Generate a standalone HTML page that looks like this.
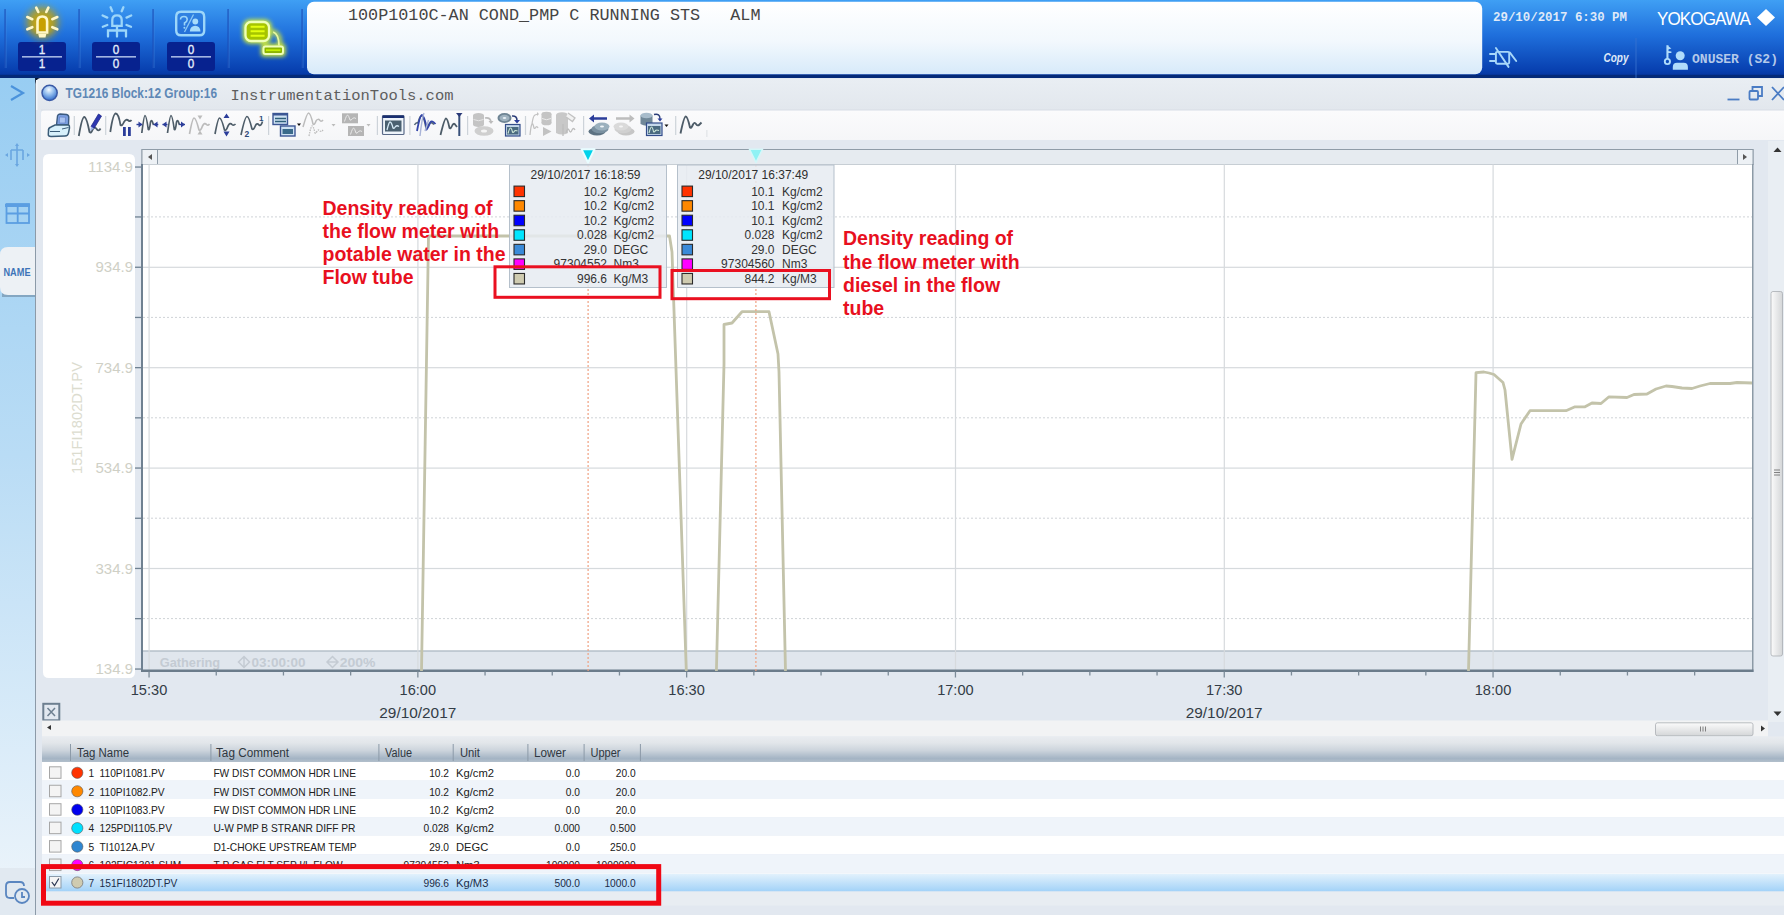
<!DOCTYPE html>
<html><head><meta charset="utf-8"><style>
html,body{margin:0;padding:0;width:1784px;height:915px;overflow:hidden;background:#e4e9ef;font-family:'Liberation Sans',sans-serif}
svg{position:absolute;left:0;top:0;display:block}
</style></head><body>
<svg width="1784" height="915" viewBox="0 0 1784 915">
<defs><linearGradient id="gTop" x1="0" y1="0" x2="0" y2="1"><stop offset="0" stop-color="#3f9ff4"/><stop offset="0.45" stop-color="#1f6fdc"/><stop offset="0.9" stop-color="#0840b0"/><stop offset="1" stop-color="#05339a"/></linearGradient><linearGradient id="gMsg" x1="0" y1="0" x2="0" y2="1"><stop offset="0" stop-color="#ffffff"/><stop offset="0.55" stop-color="#f2f8fd"/><stop offset="1" stop-color="#d7eafa"/></linearGradient><linearGradient id="gSide" x1="0" y1="0" x2="0" y2="1"><stop offset="0" stop-color="#98cdf2"/><stop offset="0.45" stop-color="#b9dcf5"/><stop offset="1" stop-color="#eef5fb"/></linearGradient><linearGradient id="gHdr" x1="0" y1="0" x2="0" y2="1"><stop offset="0" stop-color="#e9ecf0"/><stop offset="0.25" stop-color="#e2e6ea"/><stop offset="0.55" stop-color="#ccd4dc"/><stop offset="0.86" stop-color="#a4b4c4"/><stop offset="1" stop-color="#b2bfcb"/></linearGradient><linearGradient id="gSel" x1="0" y1="0" x2="0" y2="1"><stop offset="0" stop-color="#e2f1fc"/><stop offset="1" stop-color="#a2d2f8"/></linearGradient><linearGradient id="gTitle" x1="0" y1="0" x2="0" y2="1"><stop offset="0" stop-color="#e9eef3"/><stop offset="1" stop-color="#e2e7ed"/></linearGradient><linearGradient id="gTool" x1="0" y1="0" x2="0" y2="1"><stop offset="0" stop-color="#fbfbfc"/><stop offset="1" stop-color="#f5f6f8"/></linearGradient><linearGradient id="gThumb" x1="0" y1="0" x2="0" y2="1"><stop offset="0" stop-color="#fbfbfb"/><stop offset="1" stop-color="#d4d6d8"/></linearGradient><linearGradient id="gThumbV" x1="0" y1="0" x2="1" y2="0"><stop offset="0" stop-color="#fbfbfb"/><stop offset="1" stop-color="#d4d6d8"/></linearGradient><radialGradient id="gGlobe" cx="0.45" cy="0.3" r="0.65"><stop offset="0" stop-color="#f4faff"/><stop offset="0.45" stop-color="#9cc4f0"/><stop offset="1" stop-color="#3f78d0"/></radialGradient><filter id="glowY" x="-50%" y="-50%" width="200%" height="200%"><feGaussianBlur stdDeviation="3.5"/></filter><filter id="glowG" x="-50%" y="-50%" width="200%" height="200%"><feGaussianBlur stdDeviation="2"/></filter></defs>
<rect x="0" y="0" width="1784" height="78" fill="url(#gTop)"/>
<rect x="0" y="74.8" width="1784" height="3.5" fill="#042a78"/>
<rect x="4.5" y="9" width="1.2" height="59" fill="#1a4fb8"/>
<rect x="5.7" y="9" width="0.8" height="59" fill="#4a8fe6" opacity="0.5"/>
<rect x="78.5" y="9" width="1.2" height="59" fill="#1a4fb8"/>
<rect x="79.7" y="9" width="0.8" height="59" fill="#4a8fe6" opacity="0.5"/>
<rect x="152.5" y="9" width="1.2" height="59" fill="#1a4fb8"/>
<rect x="153.7" y="9" width="0.8" height="59" fill="#4a8fe6" opacity="0.5"/>
<rect x="227.5" y="9" width="1.2" height="59" fill="#1a4fb8"/>
<rect x="228.7" y="9" width="0.8" height="59" fill="#4a8fe6" opacity="0.5"/>
<rect x="301.5" y="9" width="1.2" height="59" fill="#1a4fb8"/>
<rect x="302.7" y="9" width="0.8" height="59" fill="#4a8fe6" opacity="0.5"/>
<rect x="18" y="42" width="48" height="29" rx="3" fill="#07228f"/>
<rect x="22" y="56.2" width="40" height="1.3" fill="#c9d8f5"/>
<text x="42" y="54" font-size="12.5" fill="#e6eefc" text-anchor="middle" font-weight="normal" font-family="Liberation Sans" textLength="6.5" lengthAdjust="spacingAndGlyphs" stroke="#e6eefc" stroke-width="0.35">1</text>
<text x="42" y="68" font-size="12.5" fill="#e6eefc" text-anchor="middle" font-weight="normal" font-family="Liberation Sans" textLength="6.5" lengthAdjust="spacingAndGlyphs" stroke="#e6eefc" stroke-width="0.35">1</text>
<rect x="92" y="42" width="48" height="29" rx="3" fill="#07228f"/>
<rect x="96" y="56.2" width="40" height="1.3" fill="#c9d8f5"/>
<text x="116" y="54" font-size="12.5" fill="#e6eefc" text-anchor="middle" font-weight="normal" font-family="Liberation Sans" textLength="6.5" lengthAdjust="spacingAndGlyphs" stroke="#e6eefc" stroke-width="0.35">0</text>
<text x="116" y="68" font-size="12.5" fill="#e6eefc" text-anchor="middle" font-weight="normal" font-family="Liberation Sans" textLength="6.5" lengthAdjust="spacingAndGlyphs" stroke="#e6eefc" stroke-width="0.35">0</text>
<rect x="167" y="42" width="48" height="29" rx="3" fill="#07228f"/>
<rect x="171" y="56.2" width="40" height="1.3" fill="#c9d8f5"/>
<text x="191" y="54" font-size="12.5" fill="#e6eefc" text-anchor="middle" font-weight="normal" font-family="Liberation Sans" textLength="6.5" lengthAdjust="spacingAndGlyphs" stroke="#e6eefc" stroke-width="0.35">0</text>
<text x="191" y="68" font-size="12.5" fill="#e6eefc" text-anchor="middle" font-weight="normal" font-family="Liberation Sans" textLength="6.5" lengthAdjust="spacingAndGlyphs" stroke="#e6eefc" stroke-width="0.35">0</text>
<g filter="url(#glowY)"><circle cx="42.3" cy="22.5" r="16" fill="#b8a018" opacity="0.85"/><circle cx="42.3" cy="24" r="9" fill="#d0a800"/></g>
<path d="M38.9,31 L38.9,21.5 Q38.9,18.5 42.4,18.5 Q45.9,18.5 45.9,21.5 L45.9,31 Z" fill="#c8a000"/>
<g stroke="#fff7c8" stroke-width="2.6" stroke-linecap="round" fill="none"><path d="M37.5,32.5 L37.5,21.5 Q37.5,16.5 42.3,16.5 Q47.1,16.5 47.1,21.5 L47.1,32.5 Z"/><path d="M36.2,7.6 L38.3,12 M48.4,7.6 L46.3,12 M27.3,17 L32.3,19.2 M27.3,29.3 L32.3,27.2 M57.3,17 L52.3,19.2 M57.3,29.3 L52.3,27.2"/></g>
<path d="M38.3,34 L46.3,34 L45.5,37.5 L39.1,37.5 Z" fill="#fff7c8"/>
<g stroke="#9cd6fa" stroke-width="2.3" stroke-linecap="round" fill="none"><path d="M112.3,25.8 L112.3,20 Q112.3,15.3 117,15.3 Q121.7,15.3 121.7,20 L121.7,25.8 Z"/><path d="M117,26 L117,36.5 M108,36.5 L108,30.5 L126,30.5 L126,36.5"/><path d="M110.6,7.2 L112.3,11.3 M123.4,7.2 L121.7,11.3 M102.6,15.5 L107.3,17.6 M102.8,26.8 L107.3,25 M131.2,15.5 L126.5,17.6 M131,26.8 L126.5,25"/></g>
<path d="M181,11.8 L199.5,11.8 Q204.2,11.8 204.2,17 L204.2,30.5 Q204.2,35.3 199.5,35.3 L181,35.3 Q176.2,35.3 176.2,30.5 L176.2,17 Q176.2,11.8 181,11.8 Z" fill="#2f6fd0" fill-opacity="0.35" stroke="#9cd6fa" stroke-width="2.4"/>
<path d="M180.5,19.5 Q180.5,16.5 184,16.5 Q187.2,16.5 187.2,19.5 Q187.2,21.5 184.5,23 L184.5,25.5" stroke="#9cd6fa" stroke-width="1.6" fill="none"/><circle cx="184.4" cy="27.8" r="1" fill="#9cd6fa"/>
<path d="M184.5,32 L193.5,14.5" stroke="#8cc8f5" stroke-width="1.3"/>
<circle cx="195.3" cy="21.5" r="2.9" fill="#a8dcfb"/><path d="M189.8,31.5 Q190.2,26 195.2,25.8 Q200.2,26 200.5,31.5 Z" fill="#a8dcfb"/>
<g filter="url(#glowG)"><rect x="243" y="19.5" width="28.5" height="24" rx="7" fill="#d8f030"/><rect x="261" y="44" width="24.5" height="12.5" rx="3" fill="#d8f030"/><path d="M272,31 Q281,33 280,46" stroke="#c8e040" stroke-width="4" fill="none"/></g>
<rect x="245.5" y="22" width="23.5" height="19" rx="5.5" fill="#a6c400" stroke="#eeffb8" stroke-width="2.3"/>
<path d="M250.6,26.8 L264.6,26.8 M250.6,31.3 L264.6,31.3 M250.6,35.8 L264.6,35.8" stroke="#e4ff10" stroke-width="2"/>
<path d="M273.2,32 Q278.8,34 279,45.5" stroke="#e6f8a0" stroke-width="1.8" fill="none"/>
<rect x="263.5" y="46.5" width="19.5" height="7.5" rx="2" fill="#8cb400" stroke="#eeffb8" stroke-width="2"/>
<path d="M266,50.2 L280.5,50.2" stroke="#c4f000" stroke-width="1.8"/>
<rect x="307" y="1.7" width="1175.2" height="72.6" rx="7" fill="url(#gMsg)"/>
<text x="348" y="20" font-size="16.6" fill="#444444" text-anchor="start" font-weight="normal" font-family="Liberation Mono" textLength="412.5" lengthAdjust="spacingAndGlyphs">100P1010C-AN COND_PMP C RUNNING STS   ALM</text>
<text x="1493" y="21" font-size="12.4" fill="#dfe9f8" text-anchor="start" font-weight="bold" font-family="Liberation Mono" textLength="134" lengthAdjust="spacingAndGlyphs">29/10/2017 6:30 PM</text>
<text x="1657" y="25" font-size="18.5" fill="#ffffff" text-anchor="start" font-weight="normal" font-family="Liberation Sans" textLength="93" lengthAdjust="spacingAndGlyphs" letter-spacing="-1">YOKOGAWA</text>
<path d="M1766,9 L1775,17.5 L1766,26 L1757,17.5 Z" fill="#ffffff"/>
<text x="1603.5" y="62" font-size="13" fill="#dfe9f8" text-anchor="start" font-weight="bold" font-family="Liberation Sans" textLength="25" lengthAdjust="spacingAndGlyphs" font-style="italic">Copy</text>
<rect x="1635.5" y="38" width="1" height="40" fill="#3a74d0" opacity="0.8"/>
<text x="1692" y="62.5" font-size="13.5" fill="#b4c9ea" text-anchor="start" font-weight="bold" font-family="Liberation Mono" textLength="86" lengthAdjust="spacingAndGlyphs">ONUSER (S2)</text>
<g stroke="#a8d8fa" stroke-width="1.9" fill="none" stroke-linecap="round" stroke-linejoin="round"><path d="M1490,54 L1495.5,54 M1490,61 L1495.5,61"/><rect x="1495.9" y="51.9" width="13.3" height="11.9" rx="1.2"/><path d="M1509.9,52.6 L1516.2,61"/><path d="M1495.9,48 L1508.5,66.9"/></g>
<g fill="#b0dcfb"><circle cx="1667.4" cy="61.5" r="2.6" fill="none" stroke="#b0dcfb" stroke-width="1.9"/><rect x="1666.4" y="45.2" width="2.1" height="13.8"/><path d="M1668,46 L1671.4,48.5 L1668,49.5 Z M1668,51 L1671.4,51.5 L1671.4,53 L1668,53 Z"/><circle cx="1680.2" cy="55.7" r="4.5"/><path d="M1672.8,69.7 L1672.8,67 Q1672.8,62.7 1677,62.7 L1683.7,62.7 Q1687.9,62.7 1687.9,67 L1687.9,69.7 Z"/></g>
<rect x="0" y="78" width="35" height="837" fill="url(#gSide)"/>
<rect x="0" y="868" width="35" height="47" fill="#e1e9f1"/>
<path d="M11,86 L23,93 L11,100" stroke="#4b93dc" stroke-width="2.2" fill="none"/>
<g stroke="#6aa6e0" stroke-width="1.6" fill="none"><path d="M17,146 L17,164 M11,150 L23,150 M11,150 L11,160 M23,150 L23,160"/></g><path d="M17,143 L15,146 L19,146 Z M17,167 L15,164 L19,164 Z M5,155 L8,153 L8,157 Z M30,155 L27,153 L27,157 Z" fill="#6aa6e0"/>
<g stroke="#5b9ee2" stroke-width="1.8" fill="none"><rect x="6.5" y="204" width="22.5" height="19"/><path d="M17.7,204 L17.7,223 M6.5,213.5 L29,213.5"/></g>
<rect x="5" y="204" width="25" height="3" fill="#5b9ee2"/>
<path d="M2,297 L35,297 L35,250 L2,250 Z" fill="#5d7890" opacity="0.5"/>
<path d="M8,247 L35,247 L35,295 L8,295 Q0,295 0,287 L0,255 Q0,247 8,247 Z" fill="#edf1f5"/>
<text x="17" y="275.5" font-size="10.5" fill="#3d74b8" text-anchor="middle" font-weight="bold" font-family="Liberation Sans" textLength="27" lengthAdjust="spacingAndGlyphs">NAME</text>
<g stroke="#5a86c0" stroke-width="1.8" fill="none"><path d="M14,898 L10,898 Q6,898 6,894 L6,886 Q6,882 10,882 L20,882 Q24,882 24,886"/><circle cx="22" cy="896" r="7" fill="#e1e9f1"/><path d="M22,892 L22,897 L25,897"/></g>
<rect x="35" y="78" width="1749" height="837" fill="#e2e8f0"/>
<rect x="35" y="78" width="1" height="837" fill="#8c9aa8"/>
<rect x="36" y="79" width="1748" height="31" fill="url(#gTitle)"/>
<circle cx="49.6" cy="92.8" r="7.6" fill="url(#gGlobe)" stroke="#3a5aa6" stroke-width="1.5"/>
<path d="M35,78 L40,78 Q36,79 35.5,84 Z" fill="#0a1830"/>
<rect x="36" y="80" width="1.5" height="30" fill="#f4f8fc"/>
<text x="65.5" y="97.8" font-size="14" fill="#5e88b6" text-anchor="start" font-weight="bold" font-family="Liberation Sans" textLength="151.5" lengthAdjust="spacingAndGlyphs">TG1216 Block:12 Group:16</text>
<text x="230.5" y="99.8" font-size="15.5" fill="#5e5e5e" text-anchor="start" font-weight="normal" font-family="Liberation Mono" textLength="223" lengthAdjust="spacingAndGlyphs">InstrumentationTools.com</text>
<g stroke="#4a7cc4" stroke-width="1.8" fill="none"><path d="M1727.5,99.5 L1739.5,99.5"/><rect x="1749.5" y="91" width="8.5" height="8.5" rx="1"/><path d="M1752.5,91 L1752.5,87 L1762,87 L1762,96 L1758,96"/><path d="M1772,87 L1784,100 M1784,87 L1772,100"/></g>
<path d="M41,140 L41,114 Q41,110 45,110 L1784,110 L1784,140 Z" fill="url(#gTool)"/>
<rect x="41" y="109.5" width="1743" height="1" fill="#d8dee5"/>
<rect x="73.7" y="116" width="1.2" height="19" fill="#cdd3d9"/>
<rect x="105.1" y="116" width="1.2" height="19" fill="#cdd3d9"/>
<rect x="268.0" y="116" width="1.2" height="19" fill="#cdd3d9"/>
<rect x="376.8" y="116" width="1.2" height="19" fill="#cdd3d9"/>
<rect x="409.3" y="116" width="1.2" height="19" fill="#cdd3d9"/>
<rect x="467.0" y="116" width="1.2" height="19" fill="#cdd3d9"/>
<rect x="524.9" y="116" width="1.2" height="19" fill="#cdd3d9"/>
<rect x="583.0" y="116" width="1.2" height="19" fill="#cdd3d9"/>
<rect x="675.1" y="116" width="1.2" height="19" fill="#cdd3d9"/>
<path d="M56.5,125 L57.5,116 Q58,114 60,114 L66.5,114.5 Q68.8,115 68.8,117.5 L68.5,125 Z" fill="#7c9fe0" stroke="#3b5a80" stroke-width="1.4"/><path d="M59.5,117 L65.5,117.3 L65.3,123 L59.3,123 Z" fill="#a9c2f0" stroke="#5a78c0" stroke-width="0.6"/><path d="M48.5,131 Q48,128 51,127 L55,125 L68.5,125 Q69.8,125.5 69.5,128 L68.5,133 Q68,136 65,136 L51,136.5 Q48,136.5 48.3,134 Z" fill="#d7f0fb" stroke="#3b5c78" stroke-width="1.5"/><path d="M50,131.5 L60,131.5 M62,129 L68.5,127.5" stroke="#3b5c78" stroke-width="1"/>
<path d="M78.8,136 Q82,117 84.3,117 Q86.5,117 89.5,132 Q91,134 93,129 Q95,126 97,129.5 Q99,131.5 100.5,128.5" stroke="#4d5c68" stroke-width="1.8" fill="none"/><path d="M91,126.5 L98.5,114 L101.5,116 L94,128.5 Z" fill="#2d36b0" stroke="#1f2a88" stroke-width="0.8"/><path d="M91,126.5 L94,128.5 L90,131 Z" fill="#9fb4e8"/>
<path d="M110.3,132 Q113,113.5 115.8,113.5 Q118.5,113.5 120.5,125 Q122,126.5 124,122 Q126,118.5 128.5,120.5 Q130,122 131.5,120" stroke="#4d5c68" stroke-width="1.8" fill="none"/><rect x="123" y="127" width="2.8" height="9" fill="#2b3d9a"/><rect x="128" y="127" width="2.8" height="9" fill="#2b3d9a"/>
<path d="M141.8,133 Q144,115.5 145,115.5 Q146.3,115.5 148.3,129.5 Q149.5,131 150.5,122 Q151.5,119 152.5,122 L153.5,125" stroke="#4d5c68" stroke-width="1.7" fill="none"/><path d="M136.5,124.5 L142,124.5" stroke="#2b3d9a" stroke-width="1.4"/><path d="M142.5,124.5 L138.5,121.5 L138.5,127.5 Z" fill="#2b3d9a"/><path d="M153.5,124.5 L158.3,124.5" stroke="#2b3d9a" stroke-width="1.4"/><path d="M153.5,124.5 L157.5,121.5 L157.5,127.5 Z" fill="#2b3d9a"/>
<path d="M167.5,133 Q170,115.5 171,115.5 Q172.3,115.5 174.3,129.5 Q175.5,131 176.5,122 Q177.5,119 178.5,122 L179.5,125" stroke="#4d5c68" stroke-width="1.7" fill="none"/><path d="M162.5,124.5 L167.5,124.5" stroke="#2b3d9a" stroke-width="1.4"/><path d="M162.5,124.5 L166.5,121.5 L166.5,127.5 Z" fill="#2b3d9a"/><path d="M179.5,124.5 L185,124.5" stroke="#2b3d9a" stroke-width="1.4"/><path d="M185,124.5 L181,121.5 L181,127.5 Z" fill="#2b3d9a"/>
<path d="M189.5,134 Q192.5,118 194,118 Q196,118 199,130 Q200.5,131.5 202.5,126 Q204.5,122 206.5,124.5 Q208,126 209.5,124" stroke="#bcbcbc" stroke-width="1.7" fill="none"/><path d="M197.5,115.5 L202.5,115.5 L200,119.5 Z M197.5,134.5 L202.5,134.5 L200,130.5 Z" fill="#bcbcbc"/>
<path d="M215,134 Q218,118 219.5,118 Q221.5,118 224.5,130 Q226,131.5 228,126 Q230,122 232,124.5 Q233.5,126 235.5,124" stroke="#4d5c68" stroke-width="1.7" fill="none"/><path d="M223.5,118 L229.5,118 L226.5,113.5 Z M223.5,131.5 L229.5,131.5 L226.5,136.5 Z" fill="#2b3d9a"/>
<path d="M241,135 Q245,116.5 247,116.5 Q249,116.5 252,129 Q253.5,130.5 255.5,125.5 Q257,122.5 259,125 Q261,126.5 262.5,121.5" stroke="#4d5c68" stroke-width="1.7" fill="none"/><text x="244.5" y="137" font-size="8.5" font-weight="bold" fill="#2f4a78" font-family="Liberation Sans">2</text><text x="259" y="120.5" font-size="8" font-weight="bold" fill="#2f4a78" font-family="Liberation Sans">1</text>
<rect x="273" y="113.5" width="14.5" height="11" fill="#cfe2f3" stroke="#3d5794" stroke-width="1.4"/><rect x="273" y="113.5" width="14.5" height="2" fill="#3d5794"/><path d="M275,118.5 L286,118.5 M275,121.5 L286,121.5" stroke="#2f5f7a" stroke-width="1.4"/><rect x="280.5" y="126" width="14.5" height="10" fill="#cfe2f3" stroke="#3d5794" stroke-width="1.4"/><rect x="282.5" y="129" width="10.5" height="5" fill="#3a6a8a"/><path d="M297,123.5 L301,123.5 L299,126 Z" fill="#111"/>
<path d="M303,127 Q307,113 308.5,113 Q310.5,113 313,124 Q314.5,125.5 316,121 Q318,118 320,120.5 Q321.5,122 323,120" stroke="#bcbcbc" stroke-width="1.5" fill="none"/><path d="M309,136 Q311,126 312,126 Q313.5,126 315,133 Q316,134 317,131 Q318.5,129 320,131 Q321.5,132 323,130" stroke="#bcbcbc" stroke-width="1.3" fill="none" stroke-dasharray="1.5,1"/><path d="M331.5,124 L335.5,124 L333.5,126.5 Z" fill="#bcbcbc"/>
<rect x="342" y="113.3" width="16" height="10" fill="#b5b5b5"/><path d="M344.5,121.5 Q346.5,115 347.5,115 Q348.5,115 350,120 Q351,121 352.5,118.5 Q354,117 356,118.5" stroke="#e8e8e8" stroke-width="1" fill="none"/><rect x="348" y="126" width="16" height="10" fill="#b5b5b5"/><path d="M350.5,134.5 Q352.5,128 353.5,128 Q354.5,128 356,133 Q357,134 358.5,131.5 Q360,130 362,131.5" stroke="#e8e8e8" stroke-width="1" fill="none"/><path d="M366.5,124 L370.5,124 L368.5,126.5 Z" fill="#bcbcbc"/>
<rect x="382.5" y="115.5" width="21.5" height="19" rx="1" fill="#eef4fa" stroke="#5a6a88" stroke-width="1.2"/><rect x="382.5" y="115.5" width="21.5" height="2.5" fill="#1a2f70"/><rect x="385" y="120.5" width="16.5" height="11" fill="#4a6070"/><path d="M387,130 Q389,122 390,122 Q391.5,122 393,128 Q394,129 395.5,126.5 Q397,125 399,126.5" stroke="#d5e8f5" stroke-width="1.3" fill="none"/>
<path d="M414.5,125 Q416,122 418,123 Q420,115 422,116 Q424,117 426,128 Q427.5,126 429,124 Q431,121 434,124.5" stroke="#56687a" stroke-width="1.6" fill="none"/><path d="M417,131 Q420,115 422,115 Q424,115 427,129 Q428.5,127 430.5,122 Q432,120 435.5,124" stroke="#3345a8" stroke-width="1.8" fill="none"/><path d="M420,136 Q422,118 424,113 M425,131 Q427,126 428.5,120" stroke="#a9b4d8" stroke-width="1.4" fill="none"/>
<path d="M440.5,135 Q444.5,118.5 446,118.5 Q447.5,118.5 449.5,128 Q450.5,129.5 452.5,125 Q454,122.5 455.5,125 L457,127" stroke="#4d5c68" stroke-width="1.8" fill="none"/><rect x="458.3" y="114" width="2" height="22" fill="#38507a"/><path d="M456,113 L462.5,113 L459.3,117 Z" fill="#2a3a78"/>
<ellipse cx="478.5" cy="115.5" rx="5.5" ry="2.5" fill="#c4c4c4"/><rect x="473" y="115.5" width="11" height="9" fill="#c4c4c4"/><ellipse cx="478.5" cy="124.5" rx="5.5" ry="2.5" fill="#c4c4c4"/><path d="M473.5,119.5 Q478.5,122 483.5,119.5" stroke="#e6e6e6" stroke-width="1" fill="none"/><path d="M485,118 Q490,117 491,121.5" stroke="#bcbcbc" stroke-width="1.6" fill="none"/><path d="M488.5,121 L493.5,121 L491,124 Z" fill="#bcbcbc"/><ellipse cx="484" cy="131" rx="9.5" ry="4.8" fill="#cfcfcf"/><ellipse cx="484" cy="131" rx="3" ry="1.5" fill="#f5f5f5"/>
<ellipse cx="504.5" cy="118" rx="7" ry="5" fill="#6e8494"/><ellipse cx="504.5" cy="118" rx="5" ry="3.2" fill="#9fb2bf"/><ellipse cx="504.5" cy="118" rx="1.8" ry="1.1" fill="#e8f0f5"/><path d="M512,116 Q517,115.5 517,120.5" stroke="#2b3d78" stroke-width="1.6" fill="none"/><path d="M514,120 L520,120 L517,123.5 Z" fill="#2b3d9a"/><rect x="505.5" y="124.5" width="14.5" height="11.5" fill="#c5d8ea" stroke="#334d8a" stroke-width="1.2"/><rect x="507" y="127" width="11.5" height="7.5" fill="#4a6a80"/><path d="M508,133.5 Q509.5,128 510.5,128 Q511.5,128 512.5,132 Q513.5,133 514.5,131 Q515.5,130 517.5,131" stroke="#cfe8d8" stroke-width="1.1" fill="none"/>
<path d="M530,135 Q531,125 532,124 Q533,123 534,128 Q535,129 536,127 Q537,126 538,128 M532,124 Q533,116 535,115 L538,114" stroke="#c2c2c2" stroke-width="1.3" fill="none"/><path d="M537,112 L539,114 L537,116 Z" fill="#c2c2c2"/><ellipse cx="546.5" cy="114" rx="5" ry="2.3" fill="#c4c4c4"/><rect x="541.5" y="114" width="10" height="9" fill="#c4c4c4"/><ellipse cx="546.5" cy="123" rx="5" ry="2.3" fill="#c4c4c4"/><path d="M542,118.5 Q546.5,121 551,118.5" stroke="#ececec" stroke-width="1" fill="none"/><path d="M543,127 L551.5,131.5 L543,136 Z" fill="#c2c2c2"/>
<ellipse cx="562" cy="115" rx="6" ry="2.8" fill="#c8c8c8"/><path d="M556,115 L556,133 Q562,136 568,133 L568,115" fill="#c8c8c8"/><path d="M568,113 L575,118 L572.5,121.5 L566,117" stroke="#c2c2c2" stroke-width="1.3" fill="#f2f2f2"/><path d="M563,124 L563,136 M566,133 Q567.5,127 569,130 Q570.5,134 572,130 Q573.5,127 575,130" stroke="#bdbdbd" stroke-width="1.3" fill="none"/>
<path d="M592,118.5 L607,118.5" stroke="#2b3d9a" stroke-width="2.5"/><path d="M589,118.5 L594,114.5 L594,122.5 Z" fill="#2b3d9a"/><ellipse cx="597" cy="131.5" rx="8.5" ry="4" fill="#5d7282"/><ellipse cx="600" cy="129" rx="8.5" ry="4.2" fill="#7a90a0"/><ellipse cx="602" cy="126.5" rx="7.5" ry="4" fill="#9bb0bd"/><ellipse cx="602" cy="126.5" rx="2" ry="1" fill="#f0f5f8"/>
<path d="M616,118.5 L631,118.5" stroke="#bdbdbd" stroke-width="2.5"/><path d="M634.5,118.5 L629.5,114.5 L629.5,122.5 Z" fill="#bdbdbd"/><ellipse cx="626" cy="131.5" rx="8.5" ry="4" fill="#c6c6c6"/><ellipse cx="623" cy="129" rx="8.5" ry="4.2" fill="#d0d0d0"/><ellipse cx="621" cy="126.5" rx="7.5" ry="4" fill="#dadada"/><ellipse cx="621" cy="126.5" rx="2" ry="1" fill="#f5f5f5"/>
<path d="M640.5,115.5 L640.5,124 Q646.5,127.5 652.5,124 L652.5,115.5" fill="#718898"/><ellipse cx="646.5" cy="115.5" rx="6" ry="2.8" fill="#a8bccb"/><path d="M654,114.5 Q660,113 660,119" stroke="#2b3d78" stroke-width="1.4" fill="none"/><path d="M657.5,118.5 L662.5,118.5 L660,121.5 Z" fill="#2b3d9a"/><rect x="646.5" y="123" width="15.5" height="12.5" fill="#c5d8ea" stroke="#334d8a" stroke-width="1.2"/><rect x="648" y="126" width="12.5" height="8" fill="#4a6a80"/><path d="M649,133 Q650.5,127 651.5,127 Q652.5,127 653.5,131.5 Q654.5,132.5 655.5,130.5 Q656.5,129.5 659,130.5" stroke="#cfe8d8" stroke-width="1.1" fill="none"/><path d="M664.5,124.5 L668.5,124.5 L666.5,127 Z" fill="#111"/>
<path d="M680.5,133.5 Q684,116.5 685.8,116.5 Q687.5,116.5 690,127.5 Q691,129 693,124.5 Q694.5,121.5 696,124 Q697.5,126.5 699.5,124.5 L701.5,122.5" stroke="#4d5c68" stroke-width="1.9" fill="none"/>
<rect x="706.5" y="130" width="0.8" height="7" fill="#d5d9dd"/>
<path d="M43,160 Q43,154 49,154 L129,154 Q135,154 135,160 L135,672 Q135,678 129,678 L49,678 Q43,678 43,672 Z" fill="#ffffff"/>
<rect x="142" y="149.5" width="1611" height="15" fill="#e6ebf0" stroke="#8f9ca8" stroke-width="1"/>
<rect x="142" y="149.5" width="15.5" height="15" fill="#edf1f5" stroke="#8f9ca8" stroke-width="1"/>
<rect x="1737.5" y="149.5" width="15.5" height="15" fill="#edf1f5" stroke="#8f9ca8" stroke-width="1"/>
<path d="M148,157 L152,154 L152,160 Z" fill="#555"/>
<path d="M1747,157 L1743,154 L1743,160 Z" fill="#555"/>
<rect x="142" y="164.5" width="1611" height="506" fill="#ffffff"/>
<rect x="143" y="651" width="1609" height="19" fill="#e0e6ed"/>
<rect x="143" y="650.3" width="1609" height="1.4" fill="#b1bcc7"/>
<text x="159.7" y="667" font-size="12" fill="#c4cbd3" text-anchor="start" font-weight="bold" font-family="Liberation Sans" textLength="60.5" lengthAdjust="spacingAndGlyphs">Gathering</text>
<text x="251.5" y="667" font-size="12" fill="#c4cbd3" text-anchor="start" font-weight="bold" font-family="Liberation Sans" textLength="54" lengthAdjust="spacingAndGlyphs">03:00:00</text>
<text x="339.7" y="667" font-size="12" fill="#c4cbd3" text-anchor="start" font-weight="bold" font-family="Liberation Sans" textLength="35.7" lengthAdjust="spacingAndGlyphs">200%</text>
<path d="M244,656.5 L249.5,662 L244,667.5 L238.5,662 Z M244,657 L244,667" stroke="#c4cbd3" stroke-width="1.5" fill="none"/>
<path d="M332.5,656.5 L338,662 L332.5,667.5 L327,662 Z M327.5,662 L337.5,662" stroke="#c4cbd3" stroke-width="1.5" fill="none"/>
<rect x="143" y="266.7" width="1609" height="1.2" fill="#d6dadd"/>
<rect x="143" y="367.1" width="1609" height="1.2" fill="#d6dadd"/>
<rect x="143" y="467.5" width="1609" height="1.2" fill="#d6dadd"/>
<rect x="143" y="567.9" width="1609" height="1.2" fill="#d6dadd"/>
<line x1="143" y1="216.9" x2="1752" y2="216.9" stroke="#cfd3d7" stroke-width="1" stroke-dasharray="2,2"/>
<line x1="143" y1="317.4" x2="1752" y2="317.4" stroke="#cfd3d7" stroke-width="1" stroke-dasharray="2,2"/>
<line x1="143" y1="417.8" x2="1752" y2="417.8" stroke="#cfd3d7" stroke-width="1" stroke-dasharray="2,2"/>
<line x1="143" y1="518.2" x2="1752" y2="518.2" stroke="#cfd3d7" stroke-width="1" stroke-dasharray="2,2"/>
<line x1="143" y1="618.6" x2="1752" y2="618.6" stroke="#cfd3d7" stroke-width="1" stroke-dasharray="2,2"/>
<rect x="148.5" y="164.5" width="1.2" height="506" fill="#d6dadd"/>
<rect x="417.3" y="164.5" width="1.2" height="506" fill="#d6dadd"/>
<rect x="686.1" y="164.5" width="1.2" height="506" fill="#d6dadd"/>
<rect x="954.9" y="164.5" width="1.2" height="506" fill="#d6dadd"/>
<rect x="1223.7" y="164.5" width="1.2" height="506" fill="#d6dadd"/>
<rect x="1492.5" y="164.5" width="1.2" height="506" fill="#d6dadd"/>
<rect x="141" y="164" width="2" height="508" fill="#6f8191"/>
<rect x="1752" y="164" width="1.5" height="508" fill="#8c9aa6"/>
<rect x="141" y="669.5" width="1612.5" height="2.5" fill="#6b7c8b"/>
<rect x="135" y="166.4" width="6" height="1.3" fill="#6f8191"/>
<rect x="135" y="216.3" width="6" height="1.3" fill="#6f8191"/>
<rect x="135" y="316.79999999999995" width="6" height="1.3" fill="#6f8191"/>
<rect x="135" y="417.2" width="6" height="1.3" fill="#6f8191"/>
<rect x="135" y="517.6" width="6" height="1.3" fill="#6f8191"/>
<rect x="135" y="618.0" width="6" height="1.3" fill="#6f8191"/>
<rect x="135" y="266.59999999999997" width="6" height="1.3" fill="#6f8191"/>
<rect x="135" y="367.0" width="6" height="1.3" fill="#6f8191"/>
<rect x="135" y="467.4" width="6" height="1.3" fill="#6f8191"/>
<rect x="135" y="567.8" width="6" height="1.3" fill="#6f8191"/>
<rect x="135" y="668.4" width="6" height="1.3" fill="#6f8191"/>
<rect x="148.4" y="671.5" width="1.3" height="6" fill="#7d8c99"/>
<rect x="215.6" y="671.5" width="1.3" height="4" fill="#7d8c99"/>
<rect x="282.79999999999995" y="671.5" width="1.3" height="4" fill="#7d8c99"/>
<rect x="350.0" y="671.5" width="1.3" height="4" fill="#7d8c99"/>
<rect x="417.2" y="671.5" width="1.3" height="6" fill="#7d8c99"/>
<rect x="484.4" y="671.5" width="1.3" height="4" fill="#7d8c99"/>
<rect x="551.6" y="671.5" width="1.3" height="4" fill="#7d8c99"/>
<rect x="618.8000000000001" y="671.5" width="1.3" height="4" fill="#7d8c99"/>
<rect x="686.0" y="671.5" width="1.3" height="6" fill="#7d8c99"/>
<rect x="753.2" y="671.5" width="1.3" height="4" fill="#7d8c99"/>
<rect x="820.4" y="671.5" width="1.3" height="4" fill="#7d8c99"/>
<rect x="887.6" y="671.5" width="1.3" height="4" fill="#7d8c99"/>
<rect x="954.8000000000001" y="671.5" width="1.3" height="6" fill="#7d8c99"/>
<rect x="1022.0" y="671.5" width="1.3" height="4" fill="#7d8c99"/>
<rect x="1089.2000000000003" y="671.5" width="1.3" height="4" fill="#7d8c99"/>
<rect x="1156.4" y="671.5" width="1.3" height="4" fill="#7d8c99"/>
<rect x="1223.6000000000001" y="671.5" width="1.3" height="6" fill="#7d8c99"/>
<rect x="1290.8000000000002" y="671.5" width="1.3" height="4" fill="#7d8c99"/>
<rect x="1358.0000000000002" y="671.5" width="1.3" height="4" fill="#7d8c99"/>
<rect x="1425.2" y="671.5" width="1.3" height="4" fill="#7d8c99"/>
<rect x="1492.4" y="671.5" width="1.3" height="6" fill="#7d8c99"/>
<rect x="1559.6000000000001" y="671.5" width="1.3" height="4" fill="#7d8c99"/>
<rect x="1626.8000000000002" y="671.5" width="1.3" height="4" fill="#7d8c99"/>
<rect x="1694.0000000000002" y="671.5" width="1.3" height="4" fill="#7d8c99"/>
<text x="133" y="172.3" font-size="15" fill="#cfd0c6" text-anchor="end" font-weight="normal" font-family="Liberation Sans" textLength="45" lengthAdjust="spacingAndGlyphs">1134.9</text>
<text x="133" y="272.3" font-size="15" fill="#cfd0c6" text-anchor="end" font-weight="normal" font-family="Liberation Sans" textLength="37.5" lengthAdjust="spacingAndGlyphs">934.9</text>
<text x="133" y="372.8" font-size="15" fill="#cfd0c6" text-anchor="end" font-weight="normal" font-family="Liberation Sans" textLength="37.5" lengthAdjust="spacingAndGlyphs">734.9</text>
<text x="133" y="473.2" font-size="15" fill="#cfd0c6" text-anchor="end" font-weight="normal" font-family="Liberation Sans" textLength="37.5" lengthAdjust="spacingAndGlyphs">534.9</text>
<text x="133" y="573.6" font-size="15" fill="#cfd0c6" text-anchor="end" font-weight="normal" font-family="Liberation Sans" textLength="37.5" lengthAdjust="spacingAndGlyphs">334.9</text>
<text x="133" y="674" font-size="15" fill="#cfd0c6" text-anchor="end" font-weight="normal" font-family="Liberation Sans" textLength="37.5" lengthAdjust="spacingAndGlyphs">134.9</text>
<text transform="translate(82,474) rotate(-90)" font-size="14.5" fill="#dcdccf" font-family="Liberation Sans" textLength="112" lengthAdjust="spacingAndGlyphs">151FI1802DT.PV</text>
<text x="149.0" y="694.5" font-size="14" fill="#333c46" text-anchor="middle" font-weight="normal" font-family="Liberation Sans" textLength="36.5" lengthAdjust="spacingAndGlyphs">15:30</text>
<text x="417.8" y="694.5" font-size="14" fill="#333c46" text-anchor="middle" font-weight="normal" font-family="Liberation Sans" textLength="36.5" lengthAdjust="spacingAndGlyphs">16:00</text>
<text x="686.6" y="694.5" font-size="14" fill="#333c46" text-anchor="middle" font-weight="normal" font-family="Liberation Sans" textLength="36.5" lengthAdjust="spacingAndGlyphs">16:30</text>
<text x="955.4" y="694.5" font-size="14" fill="#333c46" text-anchor="middle" font-weight="normal" font-family="Liberation Sans" textLength="36.5" lengthAdjust="spacingAndGlyphs">17:00</text>
<text x="1224.2" y="694.5" font-size="14" fill="#333c46" text-anchor="middle" font-weight="normal" font-family="Liberation Sans" textLength="36.5" lengthAdjust="spacingAndGlyphs">17:30</text>
<text x="1493.0" y="694.5" font-size="14" fill="#333c46" text-anchor="middle" font-weight="normal" font-family="Liberation Sans" textLength="36.5" lengthAdjust="spacingAndGlyphs">18:00</text>
<text x="417.8" y="718" font-size="14.5" fill="#333c46" text-anchor="middle" font-weight="normal" font-family="Liberation Sans" textLength="77" lengthAdjust="spacingAndGlyphs">29/10/2017</text>
<text x="1224.2" y="718" font-size="14.5" fill="#333c46" text-anchor="middle" font-weight="normal" font-family="Liberation Sans" textLength="77" lengthAdjust="spacingAndGlyphs">29/10/2017</text>
<path d="M421.5,671 L428.5,236 L669.5,236 L672,252 L686.3,671" stroke="#c3c3aa" stroke-width="2.8" fill="none" stroke-linejoin="round"/>
<path d="M716.4,671 L724,364 L724,324.5 L732,323 L742,311.7 L769,311.7 L778,354 L779,372 L785.5,671" stroke="#c3c3aa" stroke-width="2.8" fill="none" stroke-linejoin="round"/>
<path d="M1468.5,671 L1476,372.7 L1484,372 L1489,373 L1494,374.5 L1503,382.5 L1505,390 L1512,459.3 L1521,424 L1530,410.7 L1566,410.7 L1575,406.8 L1585,406.8 L1592,403 L1601,403.5 L1609,396.8 L1627,397.5 L1634,394.5 L1647,394 L1656,389 L1666,386 L1672,386.5 L1682,388 L1692,388.5 L1700,386 L1710,383.5 L1730,383.5 L1737,382.5 L1752,383" stroke="#c3c3aa" stroke-width="2.8" fill="none" stroke-linejoin="round"/>
<line x1="588.1" y1="165" x2="588.1" y2="671" stroke="#f0a080" stroke-width="1.2" stroke-dasharray="2,2"/>
<line x1="755.9" y1="165" x2="755.9" y2="671" stroke="#f0a080" stroke-width="1.2" stroke-dasharray="2,2"/>
<path d="M581.5,149.3 L594.5,149.3 L588,162.5 Z" fill="#00d2ea" stroke="#e8fdff" stroke-width="2" stroke-linejoin="round"/>
<path d="M749.5,149.3 L762.5,149.3 L756,162.5 Z" fill="#8ff2f4" stroke="#d5f6f8" stroke-width="1.6" stroke-linejoin="round"/>
<rect x="509.5" y="165" width="157.0" height="122.5" fill="#e6ebf1" fill-opacity="0.86" stroke="#b5c0cb" stroke-width="1"/>
<text x="585.5" y="179" font-size="12" fill="#2e2e2e" text-anchor="middle" font-weight="normal" font-family="Liberation Sans" textLength="110" lengthAdjust="spacingAndGlyphs">29/10/2017 16:18:59</text>
<rect x="514.0" y="186.10000000000002" width="10.5" height="10.5" fill="#ff3300" stroke="#2a2a2a" stroke-width="1.1"/>
<text x="607" y="195.60000000000002" font-size="12" fill="#333333" text-anchor="end" font-weight="normal" font-family="Liberation Sans">10.2</text>
<text x="613.5" y="195.60000000000002" font-size="12" fill="#333333" text-anchor="start" font-weight="normal" font-family="Liberation Sans">Kg/cm2</text>
<rect x="514.0" y="200.66000000000003" width="10.5" height="10.5" fill="#ff8800" stroke="#2a2a2a" stroke-width="1.1"/>
<text x="607" y="210.16000000000003" font-size="12" fill="#333333" text-anchor="end" font-weight="normal" font-family="Liberation Sans">10.2</text>
<text x="613.5" y="210.16000000000003" font-size="12" fill="#333333" text-anchor="start" font-weight="normal" font-family="Liberation Sans">Kg/cm2</text>
<rect x="514.0" y="215.22000000000003" width="10.5" height="10.5" fill="#0000ff" stroke="#2a2a2a" stroke-width="1.1"/>
<text x="607" y="224.72000000000003" font-size="12" fill="#333333" text-anchor="end" font-weight="normal" font-family="Liberation Sans">10.2</text>
<text x="613.5" y="224.72000000000003" font-size="12" fill="#333333" text-anchor="start" font-weight="normal" font-family="Liberation Sans">Kg/cm2</text>
<rect x="514.0" y="229.78000000000003" width="10.5" height="10.5" fill="#00e5ff" stroke="#2a2a2a" stroke-width="1.1"/>
<text x="607" y="239.28000000000003" font-size="12" fill="#333333" text-anchor="end" font-weight="normal" font-family="Liberation Sans">0.028</text>
<text x="613.5" y="239.28000000000003" font-size="12" fill="#333333" text-anchor="start" font-weight="normal" font-family="Liberation Sans">Kg/cm2</text>
<rect x="514.0" y="244.34000000000003" width="10.5" height="10.5" fill="#3a8ad8" stroke="#2a2a2a" stroke-width="1.1"/>
<text x="607" y="253.84000000000003" font-size="12" fill="#333333" text-anchor="end" font-weight="normal" font-family="Liberation Sans">29.0</text>
<text x="613.5" y="253.84000000000003" font-size="12" fill="#333333" text-anchor="start" font-weight="normal" font-family="Liberation Sans">DEGC</text>
<rect x="514.0" y="258.90000000000003" width="10.5" height="10.5" fill="#ff00ff" stroke="#2a2a2a" stroke-width="1.1"/>
<text x="607" y="268.40000000000003" font-size="12" fill="#333333" text-anchor="end" font-weight="normal" font-family="Liberation Sans">97304552</text>
<text x="613.5" y="268.40000000000003" font-size="12" fill="#333333" text-anchor="start" font-weight="normal" font-family="Liberation Sans">Nm3</text>
<rect x="514.0" y="273.46000000000004" width="10.5" height="10.5" fill="#cfcbb0" stroke="#2a2a2a" stroke-width="1.1"/>
<text x="607" y="282.96000000000004" font-size="12" fill="#333333" text-anchor="end" font-weight="normal" font-family="Liberation Sans">996.6</text>
<text x="613.5" y="282.96000000000004" font-size="12" fill="#333333" text-anchor="start" font-weight="normal" font-family="Liberation Sans">Kg/M3</text>
<rect x="677.5" y="165" width="156.5" height="122.5" fill="#e6ebf1" fill-opacity="0.86" stroke="#b5c0cb" stroke-width="1"/>
<text x="753.25" y="179" font-size="12" fill="#2e2e2e" text-anchor="middle" font-weight="normal" font-family="Liberation Sans" textLength="110" lengthAdjust="spacingAndGlyphs">29/10/2017 16:37:49</text>
<rect x="682.0" y="186.10000000000002" width="10.5" height="10.5" fill="#ff3300" stroke="#2a2a2a" stroke-width="1.1"/>
<text x="774.5" y="195.60000000000002" font-size="12" fill="#333333" text-anchor="end" font-weight="normal" font-family="Liberation Sans">10.1</text>
<text x="782" y="195.60000000000002" font-size="12" fill="#333333" text-anchor="start" font-weight="normal" font-family="Liberation Sans">Kg/cm2</text>
<rect x="682.0" y="200.66000000000003" width="10.5" height="10.5" fill="#ff8800" stroke="#2a2a2a" stroke-width="1.1"/>
<text x="774.5" y="210.16000000000003" font-size="12" fill="#333333" text-anchor="end" font-weight="normal" font-family="Liberation Sans">10.1</text>
<text x="782" y="210.16000000000003" font-size="12" fill="#333333" text-anchor="start" font-weight="normal" font-family="Liberation Sans">Kg/cm2</text>
<rect x="682.0" y="215.22000000000003" width="10.5" height="10.5" fill="#0000ff" stroke="#2a2a2a" stroke-width="1.1"/>
<text x="774.5" y="224.72000000000003" font-size="12" fill="#333333" text-anchor="end" font-weight="normal" font-family="Liberation Sans">10.1</text>
<text x="782" y="224.72000000000003" font-size="12" fill="#333333" text-anchor="start" font-weight="normal" font-family="Liberation Sans">Kg/cm2</text>
<rect x="682.0" y="229.78000000000003" width="10.5" height="10.5" fill="#00e5ff" stroke="#2a2a2a" stroke-width="1.1"/>
<text x="774.5" y="239.28000000000003" font-size="12" fill="#333333" text-anchor="end" font-weight="normal" font-family="Liberation Sans">0.028</text>
<text x="782" y="239.28000000000003" font-size="12" fill="#333333" text-anchor="start" font-weight="normal" font-family="Liberation Sans">Kg/cm2</text>
<rect x="682.0" y="244.34000000000003" width="10.5" height="10.5" fill="#3a8ad8" stroke="#2a2a2a" stroke-width="1.1"/>
<text x="774.5" y="253.84000000000003" font-size="12" fill="#333333" text-anchor="end" font-weight="normal" font-family="Liberation Sans">29.0</text>
<text x="782" y="253.84000000000003" font-size="12" fill="#333333" text-anchor="start" font-weight="normal" font-family="Liberation Sans">DEGC</text>
<rect x="682.0" y="258.90000000000003" width="10.5" height="10.5" fill="#ff00ff" stroke="#2a2a2a" stroke-width="1.1"/>
<text x="774.5" y="268.40000000000003" font-size="12" fill="#333333" text-anchor="end" font-weight="normal" font-family="Liberation Sans">97304560</text>
<text x="782" y="268.40000000000003" font-size="12" fill="#333333" text-anchor="start" font-weight="normal" font-family="Liberation Sans">Nm3</text>
<rect x="682.0" y="273.46000000000004" width="10.5" height="10.5" fill="#cfcbb0" stroke="#2a2a2a" stroke-width="1.1"/>
<text x="774.5" y="282.96000000000004" font-size="12" fill="#333333" text-anchor="end" font-weight="normal" font-family="Liberation Sans">844.2</text>
<text x="782" y="282.96000000000004" font-size="12" fill="#333333" text-anchor="start" font-weight="normal" font-family="Liberation Sans">Kg/M3</text>
<rect x="495" y="266.8" width="165" height="30.5" fill="none" stroke="#ea1020" stroke-width="3"/>
<rect x="672" y="270.5" width="157.5" height="28.2" fill="none" stroke="#ea1020" stroke-width="3"/>
<text x="322.5" y="214.7" font-size="19.5" fill="#e8101e" text-anchor="start" font-weight="bold" font-family="Liberation Sans">Density reading of</text>
<text x="322.5" y="237.89999999999998" font-size="19.5" fill="#e8101e" text-anchor="start" font-weight="bold" font-family="Liberation Sans">the flow meter with</text>
<text x="322.5" y="261.09999999999997" font-size="19.5" fill="#e8101e" text-anchor="start" font-weight="bold" font-family="Liberation Sans">potable water in the</text>
<text x="322.5" y="284.29999999999995" font-size="19.5" fill="#e8101e" text-anchor="start" font-weight="bold" font-family="Liberation Sans">Flow tube</text>
<text x="843" y="245.3" font-size="19.5" fill="#e8101e" text-anchor="start" font-weight="bold" font-family="Liberation Sans">Density reading of</text>
<text x="843" y="268.5" font-size="19.5" fill="#e8101e" text-anchor="start" font-weight="bold" font-family="Liberation Sans">the flow meter with</text>
<text x="843" y="291.7" font-size="19.5" fill="#e8101e" text-anchor="start" font-weight="bold" font-family="Liberation Sans">diesel in the flow</text>
<text x="843" y="314.9" font-size="19.5" fill="#e8101e" text-anchor="start" font-weight="bold" font-family="Liberation Sans">tube</text>
<rect x="1768" y="141" width="16" height="581" fill="#e9eef3"/>
<path d="M1773.5,152 L1777.5,147.5 L1781.5,152 Z" fill="#333"/>
<path d="M1773.5,711.5 L1777.5,716 L1781.5,711.5 Z" fill="#333"/>
<rect x="1771" y="291.5" width="11.5" height="364.5" rx="2" fill="url(#gThumbV)" stroke="#a9adb2" stroke-width="0.8"/>
<path d="M1774,470 L1780,470 M1774,472.5 L1780,472.5 M1774,475 L1780,475" stroke="#666" stroke-width="0.8"/>
<rect x="43.3" y="703.8" width="16" height="16.5" fill="none" stroke="#6d7f90" stroke-width="2"/>
<path d="M47.5,708 L55,716 M55,708 L47.5,716" stroke="#6d7f90" stroke-width="1.5"/>
<rect x="42" y="720.5" width="1726" height="16" fill="#f2f3f4"/>
<path d="M47,727.5 L51,725 L51,730 Z" fill="#333"/>
<path d="M1765,728.5 L1761,725.5 L1761,731.5 Z" fill="#333"/>
<rect x="1655.5" y="722.8" width="97.5" height="13" rx="2" fill="url(#gThumb)" stroke="#a9adb2" stroke-width="0.8"/>
<path d="M1700.5,726.5 L1700.5,731.5 M1703,726.5 L1703,731.5 M1705.5,726.5 L1705.5,731.5" stroke="#666" stroke-width="0.8"/>
<rect x="42" y="736.5" width="1742" height="25.5" fill="url(#gHdr)"/>
<rect x="70.0" y="744" width="1" height="17" fill="#8c9aa8"/>
<rect x="210.4" y="744" width="1" height="17" fill="#8c9aa8"/>
<rect x="378.4" y="744" width="1" height="17" fill="#8c9aa8"/>
<rect x="452.7" y="744" width="1" height="17" fill="#8c9aa8"/>
<rect x="527.4" y="744" width="1" height="17" fill="#8c9aa8"/>
<rect x="583.6" y="744" width="1" height="17" fill="#8c9aa8"/>
<rect x="639.9" y="744" width="1" height="17" fill="#8c9aa8"/>
<text x="77" y="756.5" font-size="12.5" fill="#2f3740" text-anchor="start" font-weight="normal" font-family="Liberation Sans" textLength="52" lengthAdjust="spacingAndGlyphs">Tag Name</text>
<text x="216" y="756.5" font-size="12.5" fill="#2f3740" text-anchor="start" font-weight="normal" font-family="Liberation Sans" textLength="73" lengthAdjust="spacingAndGlyphs">Tag Comment</text>
<text x="385" y="756.5" font-size="12.5" fill="#2f3740" text-anchor="start" font-weight="normal" font-family="Liberation Sans" textLength="27" lengthAdjust="spacingAndGlyphs">Value</text>
<text x="460" y="756.5" font-size="12.5" fill="#2f3740" text-anchor="start" font-weight="normal" font-family="Liberation Sans" textLength="20" lengthAdjust="spacingAndGlyphs">Unit</text>
<text x="534" y="756.5" font-size="12.5" fill="#2f3740" text-anchor="start" font-weight="normal" font-family="Liberation Sans" textLength="32" lengthAdjust="spacingAndGlyphs">Lower</text>
<text x="590.5" y="756.5" font-size="12.5" fill="#2f3740" text-anchor="start" font-weight="normal" font-family="Liberation Sans" textLength="30" lengthAdjust="spacingAndGlyphs">Upper</text>
<rect x="42" y="762.0" width="1742" height="18.5" fill="#ffffff"/>
<rect x="42" y="780.45" width="1742" height="18.5" fill="#eff4fa"/>
<rect x="42" y="798.9" width="1742" height="18.5" fill="#ffffff"/>
<rect x="42" y="817.35" width="1742" height="18.5" fill="#eff4fa"/>
<rect x="42" y="835.8" width="1742" height="18.5" fill="#ffffff"/>
<rect x="42" y="854.25" width="1742" height="18.5" fill="#eff4fa"/>
<rect x="49.5" y="766.8" width="11.5" height="11.5" fill="#f4f4f4" stroke="#a6a6a6" stroke-width="1"/>
<circle cx="77.3" cy="772.8" r="5.6" fill="#ff3300" stroke="#555" stroke-width="0.6"/>
<text x="88.5" y="777.0999999999999" font-size="11.6" fill="#202020" text-anchor="start" font-weight="normal" font-family="Liberation Sans" textLength="5.67" lengthAdjust="spacingAndGlyphs">1</text>
<text x="99.6" y="777.0999999999999" font-size="11.6" fill="#202020" text-anchor="start" font-weight="normal" font-family="Liberation Sans" textLength="65.03" lengthAdjust="spacingAndGlyphs">110PI1081.PV</text>
<text x="213.4" y="777.0999999999999" font-size="11.6" fill="#202020" text-anchor="start" font-weight="normal" font-family="Liberation Sans" textLength="142.61" lengthAdjust="spacingAndGlyphs">FW DIST COMMON HDR LINE</text>
<text x="449" y="777.0999999999999" font-size="11.6" fill="#202020" text-anchor="end" font-weight="normal" font-family="Liberation Sans" textLength="19.85" lengthAdjust="spacingAndGlyphs">10.2</text>
<text x="456" y="777.0999999999999" font-size="11.6" fill="#202020" text-anchor="start" font-weight="normal" font-family="Liberation Sans" textLength="37.97" lengthAdjust="spacingAndGlyphs">Kg/cm2</text>
<text x="580" y="777.0999999999999" font-size="11.6" fill="#202020" text-anchor="end" font-weight="normal" font-family="Liberation Sans" textLength="14.18" lengthAdjust="spacingAndGlyphs">0.0</text>
<text x="635.6" y="777.0999999999999" font-size="11.6" fill="#202020" text-anchor="end" font-weight="normal" font-family="Liberation Sans" textLength="19.85" lengthAdjust="spacingAndGlyphs">20.0</text>
<rect x="49.5" y="785.25" width="11.5" height="11.5" fill="#f4f4f4" stroke="#a6a6a6" stroke-width="1"/>
<circle cx="77.3" cy="791.25" r="5.6" fill="#ff8800" stroke="#555" stroke-width="0.6"/>
<text x="88.5" y="795.55" font-size="11.6" fill="#202020" text-anchor="start" font-weight="normal" font-family="Liberation Sans" textLength="5.67" lengthAdjust="spacingAndGlyphs">2</text>
<text x="99.6" y="795.55" font-size="11.6" fill="#202020" text-anchor="start" font-weight="normal" font-family="Liberation Sans" textLength="65.03" lengthAdjust="spacingAndGlyphs">110PI1082.PV</text>
<text x="213.4" y="795.55" font-size="11.6" fill="#202020" text-anchor="start" font-weight="normal" font-family="Liberation Sans" textLength="142.61" lengthAdjust="spacingAndGlyphs">FW DIST COMMON HDR LINE</text>
<text x="449" y="795.55" font-size="11.6" fill="#202020" text-anchor="end" font-weight="normal" font-family="Liberation Sans" textLength="19.85" lengthAdjust="spacingAndGlyphs">10.2</text>
<text x="456" y="795.55" font-size="11.6" fill="#202020" text-anchor="start" font-weight="normal" font-family="Liberation Sans" textLength="37.97" lengthAdjust="spacingAndGlyphs">Kg/cm2</text>
<text x="580" y="795.55" font-size="11.6" fill="#202020" text-anchor="end" font-weight="normal" font-family="Liberation Sans" textLength="14.18" lengthAdjust="spacingAndGlyphs">0.0</text>
<text x="635.6" y="795.55" font-size="11.6" fill="#202020" text-anchor="end" font-weight="normal" font-family="Liberation Sans" textLength="19.85" lengthAdjust="spacingAndGlyphs">20.0</text>
<rect x="49.5" y="803.6999999999999" width="11.5" height="11.5" fill="#f4f4f4" stroke="#a6a6a6" stroke-width="1"/>
<circle cx="77.3" cy="809.6999999999999" r="5.6" fill="#0000ee" stroke="#555" stroke-width="0.6"/>
<text x="88.5" y="813.9999999999999" font-size="11.6" fill="#202020" text-anchor="start" font-weight="normal" font-family="Liberation Sans" textLength="5.67" lengthAdjust="spacingAndGlyphs">3</text>
<text x="99.6" y="813.9999999999999" font-size="11.6" fill="#202020" text-anchor="start" font-weight="normal" font-family="Liberation Sans" textLength="65.03" lengthAdjust="spacingAndGlyphs">110PI1083.PV</text>
<text x="213.4" y="813.9999999999999" font-size="11.6" fill="#202020" text-anchor="start" font-weight="normal" font-family="Liberation Sans" textLength="142.61" lengthAdjust="spacingAndGlyphs">FW DIST COMMON HDR LINE</text>
<text x="449" y="813.9999999999999" font-size="11.6" fill="#202020" text-anchor="end" font-weight="normal" font-family="Liberation Sans" textLength="19.85" lengthAdjust="spacingAndGlyphs">10.2</text>
<text x="456" y="813.9999999999999" font-size="11.6" fill="#202020" text-anchor="start" font-weight="normal" font-family="Liberation Sans" textLength="37.97" lengthAdjust="spacingAndGlyphs">Kg/cm2</text>
<text x="580" y="813.9999999999999" font-size="11.6" fill="#202020" text-anchor="end" font-weight="normal" font-family="Liberation Sans" textLength="14.18" lengthAdjust="spacingAndGlyphs">0.0</text>
<text x="635.6" y="813.9999999999999" font-size="11.6" fill="#202020" text-anchor="end" font-weight="normal" font-family="Liberation Sans" textLength="19.85" lengthAdjust="spacingAndGlyphs">20.0</text>
<rect x="49.5" y="822.15" width="11.5" height="11.5" fill="#f4f4f4" stroke="#a6a6a6" stroke-width="1"/>
<circle cx="77.3" cy="828.15" r="5.6" fill="#00e0ff" stroke="#555" stroke-width="0.6"/>
<text x="88.5" y="832.4499999999999" font-size="11.6" fill="#202020" text-anchor="start" font-weight="normal" font-family="Liberation Sans" textLength="5.67" lengthAdjust="spacingAndGlyphs">4</text>
<text x="99.6" y="832.4499999999999" font-size="11.6" fill="#202020" text-anchor="start" font-weight="normal" font-family="Liberation Sans" textLength="72.39" lengthAdjust="spacingAndGlyphs">125PDI1105.PV</text>
<text x="213.4" y="832.4499999999999" font-size="11.6" fill="#202020" text-anchor="start" font-weight="normal" font-family="Liberation Sans" textLength="142.05" lengthAdjust="spacingAndGlyphs">U-W PMP B STRANR DIFF PR</text>
<text x="449" y="832.4499999999999" font-size="11.6" fill="#202020" text-anchor="end" font-weight="normal" font-family="Liberation Sans" textLength="25.52" lengthAdjust="spacingAndGlyphs">0.028</text>
<text x="456" y="832.4499999999999" font-size="11.6" fill="#202020" text-anchor="start" font-weight="normal" font-family="Liberation Sans" textLength="37.97" lengthAdjust="spacingAndGlyphs">Kg/cm2</text>
<text x="580" y="832.4499999999999" font-size="11.6" fill="#202020" text-anchor="end" font-weight="normal" font-family="Liberation Sans" textLength="25.52" lengthAdjust="spacingAndGlyphs">0.000</text>
<text x="635.6" y="832.4499999999999" font-size="11.6" fill="#202020" text-anchor="end" font-weight="normal" font-family="Liberation Sans" textLength="25.52" lengthAdjust="spacingAndGlyphs">0.500</text>
<rect x="49.5" y="840.5999999999999" width="11.5" height="11.5" fill="#f4f4f4" stroke="#a6a6a6" stroke-width="1"/>
<circle cx="77.3" cy="846.5999999999999" r="5.6" fill="#2f86d0" stroke="#555" stroke-width="0.6"/>
<text x="88.5" y="850.8999999999999" font-size="11.6" fill="#202020" text-anchor="start" font-weight="normal" font-family="Liberation Sans" textLength="5.67" lengthAdjust="spacingAndGlyphs">5</text>
<text x="99.6" y="850.8999999999999" font-size="11.6" fill="#202020" text-anchor="start" font-weight="normal" font-family="Liberation Sans" textLength="55.0" lengthAdjust="spacingAndGlyphs">TI1012A.PV</text>
<text x="213.4" y="850.8999999999999" font-size="11.6" fill="#202020" text-anchor="start" font-weight="normal" font-family="Liberation Sans" textLength="143.2" lengthAdjust="spacingAndGlyphs">D1-CHOKE UPSTREAM TEMP</text>
<text x="449" y="850.8999999999999" font-size="11.6" fill="#202020" text-anchor="end" font-weight="normal" font-family="Liberation Sans" textLength="19.85" lengthAdjust="spacingAndGlyphs">29.0</text>
<text x="456" y="850.8999999999999" font-size="11.6" fill="#202020" text-anchor="start" font-weight="normal" font-family="Liberation Sans" textLength="32.36" lengthAdjust="spacingAndGlyphs">DEGC</text>
<text x="580" y="850.8999999999999" font-size="11.6" fill="#202020" text-anchor="end" font-weight="normal" font-family="Liberation Sans" textLength="14.18" lengthAdjust="spacingAndGlyphs">0.0</text>
<text x="635.6" y="850.8999999999999" font-size="11.6" fill="#202020" text-anchor="end" font-weight="normal" font-family="Liberation Sans" textLength="25.52" lengthAdjust="spacingAndGlyphs">250.0</text>
<rect x="49.5" y="859.05" width="11.5" height="11.5" fill="#f4f4f4" stroke="#a6a6a6" stroke-width="1"/>
<circle cx="77.3" cy="865.05" r="5.6" fill="#ff00ff" stroke="#555" stroke-width="0.6"/>
<text x="88.5" y="869.3499999999999" font-size="11.6" fill="#202020" text-anchor="start" font-weight="normal" font-family="Liberation Sans" textLength="5.67" lengthAdjust="spacingAndGlyphs">6</text>
<text x="99.6" y="869.3499999999999" font-size="11.6" fill="#202020" text-anchor="start" font-weight="normal" font-family="Liberation Sans" textLength="81.64" lengthAdjust="spacingAndGlyphs">102FIC1301.SUM</text>
<text x="213.4" y="869.3499999999999" font-size="11.6" fill="#202020" text-anchor="start" font-weight="normal" font-family="Liberation Sans" textLength="129.23" lengthAdjust="spacingAndGlyphs">T-P GAS FLT SEP I/L FLOW</text>
<text x="449" y="869.3499999999999" font-size="11.6" fill="#202020" text-anchor="end" font-weight="normal" font-family="Liberation Sans" textLength="45.38" lengthAdjust="spacingAndGlyphs">97304552</text>
<text x="456" y="869.3499999999999" font-size="11.6" fill="#202020" text-anchor="start" font-weight="normal" font-family="Liberation Sans" textLength="23.65" lengthAdjust="spacingAndGlyphs">Nm3</text>
<text x="580" y="869.3499999999999" font-size="11.6" fill="#202020" text-anchor="end" font-weight="normal" font-family="Liberation Sans" textLength="34.03" lengthAdjust="spacingAndGlyphs">100000</text>
<text x="635.6" y="869.3499999999999" font-size="11.6" fill="#202020" text-anchor="end" font-weight="normal" font-family="Liberation Sans" textLength="39.71" lengthAdjust="spacingAndGlyphs">1000000</text>
<rect x="42" y="872.7" width="1742" height="3" fill="#f3f7fb"/>
<rect x="42" y="874" width="1742" height="17.5" fill="url(#gSel)"/>
<rect x="42" y="891.5" width="1742" height="14" fill="#e8edf2"/>
<rect x="49.5" y="876.5" width="11.5" height="11.5" fill="#f4f4f4" stroke="#8a9aa8" stroke-width="1"/>
<path d="M51.8,882.0 L54.5,885.7 L58.8,878.5" stroke="#2a3550" stroke-width="1.2" fill="none"/>
<circle cx="77.3" cy="882.5" r="5.6" fill="#cfcbb0" stroke="#777" stroke-width="0.8"/>
<text x="88.5" y="886.8" font-size="11.6" fill="#1c2c48" text-anchor="start" font-weight="normal" font-family="Liberation Sans" textLength="5.67" lengthAdjust="spacingAndGlyphs">7</text>
<text x="99.6" y="886.8" font-size="11.6" fill="#1c2c48" text-anchor="start" font-weight="normal" font-family="Liberation Sans" textLength="77.68" lengthAdjust="spacingAndGlyphs">151FI1802DT.PV</text>
<text x="449" y="886.8" font-size="11.6" fill="#1c2c48" text-anchor="end" font-weight="normal" font-family="Liberation Sans" textLength="25.52" lengthAdjust="spacingAndGlyphs">996.6</text>
<text x="456" y="886.8" font-size="11.6" fill="#1c2c48" text-anchor="start" font-weight="normal" font-family="Liberation Sans" textLength="32.37" lengthAdjust="spacingAndGlyphs">Kg/M3</text>
<text x="580" y="886.8" font-size="11.6" fill="#1c2c48" text-anchor="end" font-weight="normal" font-family="Liberation Sans" textLength="25.52" lengthAdjust="spacingAndGlyphs">500.0</text>
<text x="635.6" y="886.8" font-size="11.6" fill="#1c2c48" text-anchor="end" font-weight="normal" font-family="Liberation Sans" textLength="31.19" lengthAdjust="spacingAndGlyphs">1000.0</text>
<rect x="43.5" y="866.6" width="615.2" height="36.6" fill="none" stroke="#f00814" stroke-width="5"/>
</svg>
</body></html>
